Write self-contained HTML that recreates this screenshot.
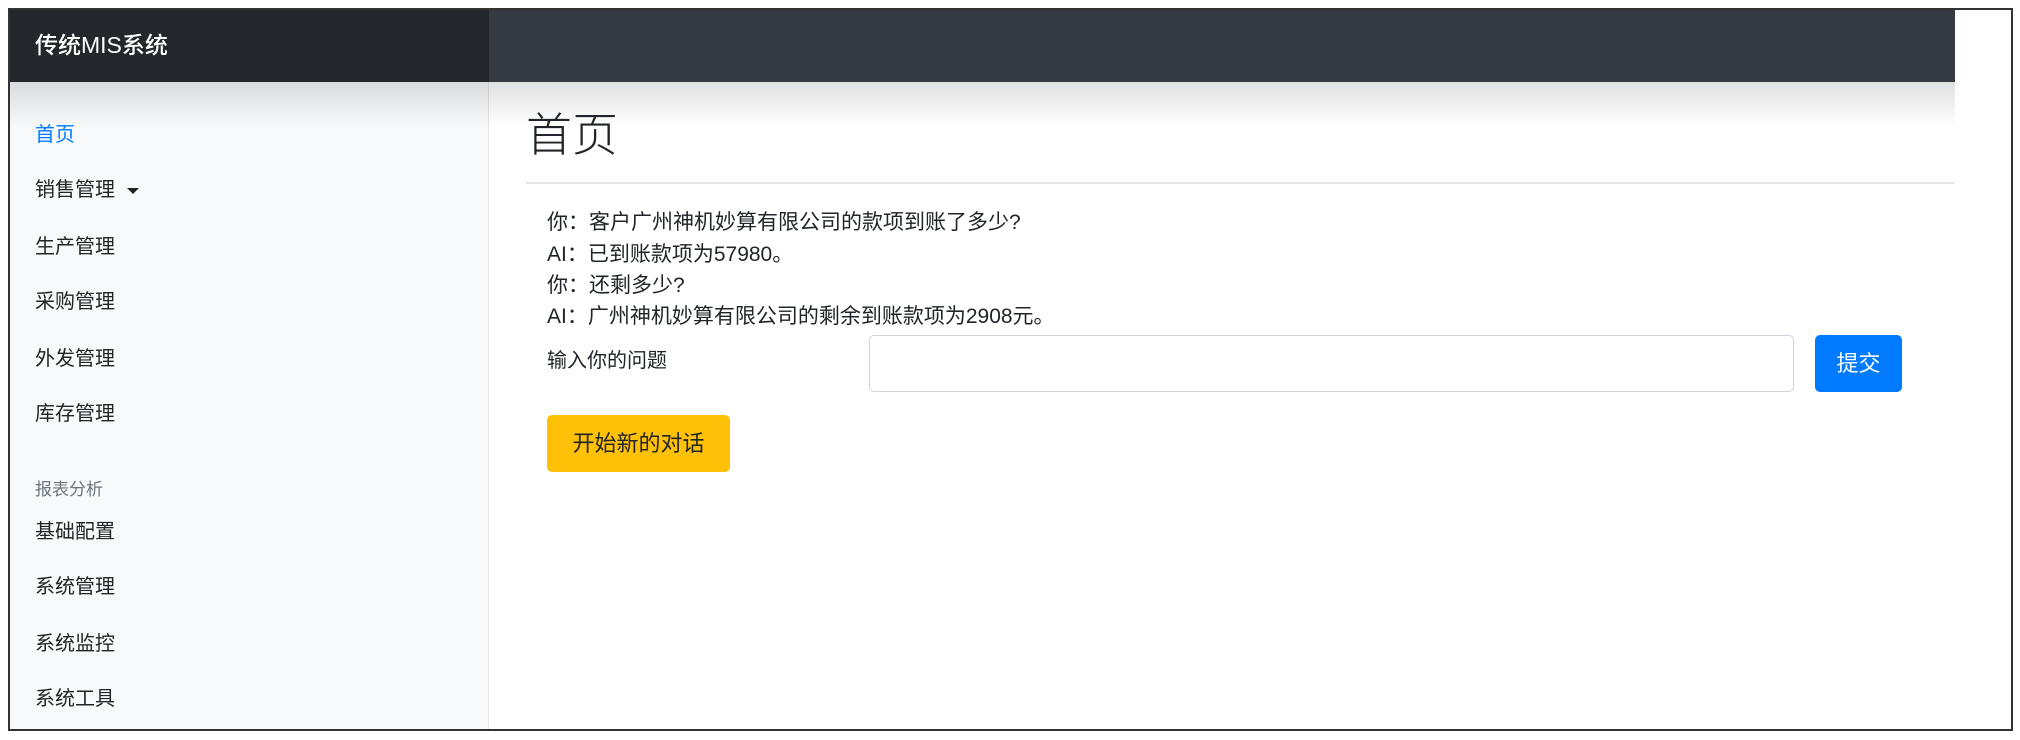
<!DOCTYPE html>
<html><head><meta charset="utf-8"><style>
*{margin:0;padding:0;box-sizing:border-box}
body{width:2020px;height:740px;background:#fff;position:relative;overflow:hidden;font-family:"Liberation Sans","Noto Sans CJK SC",sans-serif;color:#212529}
.frame{position:absolute;left:8px;top:8px;width:2005px;height:723px;border:2px solid #333;overflow:hidden}
.a{position:absolute}
.side{left:0;top:0;width:479px;height:723px;background:#f8f9fa;border-right:1px solid #e3e3e3}
.hdr1{left:0;top:0;width:479px;height:72px;background:#23272b}
.hdr2{left:479px;top:0;width:1466px;height:72px;background:#343a40}
.shadow{left:0;top:72px;width:1945px;height:45px;background:linear-gradient(rgba(0,0,0,.12),rgba(0,0,0,0))}
.brand{left:25px;top:21px;font-size:23px;color:#fff;line-height:28px;font-weight:500}
.nav{left:25px;font-size:20px;line-height:24px;color:#212529}
.t{font-size:21px;line-height:24px;left:537px}
</style></head><body>
<div class="frame">
<div class="a side"></div>
<div class="a hdr1"></div>
<div class="a hdr2"></div>
<div class="a shadow"></div>
<div class="a brand">传统MIS系统</div>
<div class="a nav" style="top:113px;color:#007bff">首页</div>
<div class="a nav" style="top:168px">销售管理 <span style="display:inline-block;width:0;height:0;border-left:6px solid transparent;border-right:6px solid transparent;border-top:6px solid #212529;vertical-align:middle;margin-left:6px"></span></div>
<div class="a nav" style="top:225px">生产管理</div>
<div class="a nav" style="top:280px">采购管理</div>
<div class="a nav" style="top:337px">外发管理</div>
<div class="a nav" style="top:392px">库存管理</div>
<div class="a nav" style="top:468px;font-size:17px;color:#6c757d">报表分析</div>
<div class="a nav" style="top:510px">基础配置</div>
<div class="a nav" style="top:565px">系统管理</div>
<div class="a nav" style="top:622px">系统监控</div>
<div class="a nav" style="top:677px">系统工具</div>
<div class="a" style="left:516px;top:98px;font-size:46px;line-height:54px;font-weight:300">首页</div>
<div class="a" style="left:516px;top:172px;width:1429px;height:2px;background:#e3e6ea"></div>
<div class="a t" style="top:201px">你：客户广州神机妙算有限公司的款项到账了多少?</div>
<div class="a t" style="top:233px">AI：已到账款项为57980。</div>
<div class="a t" style="top:264px">你：还剩多少?</div>
<div class="a t" style="top:295px">AI：广州神机妙算有限公司的剩余到账款项为2908元。</div>
<div class="a t" style="top:339px;font-size:20px">输入你的问题</div>
<div class="a" style="left:859px;top:325px;width:925px;height:57px;border:1px solid #ced4da;border-radius:5px"></div>
<div class="a" style="left:1805px;top:325px;width:87px;height:57px;background:#007bff;border-radius:5px;color:#fff;font-size:22px;line-height:57px;text-align:center">提交</div>
<div class="a" style="left:537px;top:405px;width:183px;height:57px;background:#ffc107;border-radius:5px;color:#212529;font-size:22px;line-height:57px;text-align:center">开始新的对话</div>
</div>
</body></html>
